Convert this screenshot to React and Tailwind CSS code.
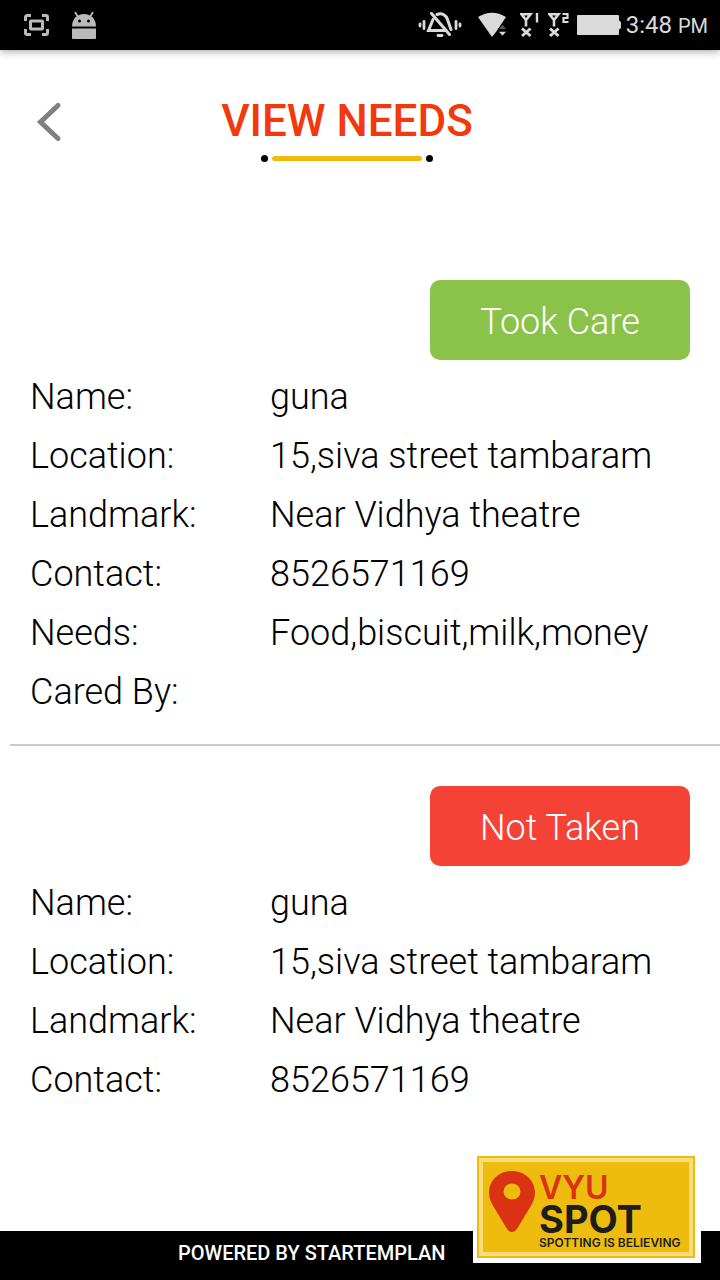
const person = [
  ["Name:", "guna"],
  ["Location:", "15,siva street tambaram"],
  ["Landmark:", "Near Vidhya theatre"],
  ["Contact:", "8526571169"],
];

const needs = [
  {
    id: 1,
    status: "Took Care",
    color: "bg-[#8bc34a]",
    rows: [...person, ["Needs:", "Food,biscuit,milk,money"], ["Cared By:", ""]],
  },
  { id: 2, status: "Not Taken", color: "bg-[#f44336]", rows: person },
];

function ScreenshotIcon() {
  return (
    <svg width="26" height="22" viewBox="0 0 26 22" fill="none" stroke="#bababa" aria-hidden="true">
      <path d="M1.500 7V3a1.500 1.500 0 0 1 1.500-1.500h4M18 1.500h4A1.500 1.500 0 0 1 23.500 3v4M23.500 15v4a1.500 1.500 0 0 1-1.500 1.500h-4M7 20.500H3A1.500 1.500 0 0 1 1.500 19v-4" strokeWidth="3" />
      <rect x="6.500" y="7" width="12" height="8" rx="0.500" strokeWidth="3" />
    </svg>
  );
}

function AndroidIcon() {
  return (
    <svg width="24" height="28" viewBox="0 0 24 28" aria-hidden="true">
      <path d="M3 1l3 5M21 1l-3 5" stroke="#bababa" strokeWidth="1.800" />
      <path d="M0 15.500C0 8 5 3 12 3s12 5 12 12.500z" fill="#bababa" />
      <circle cx="7.500" cy="10" r="1.500" />
      <circle cx="16.500" cy="10" r="1.500" />
      <path d="M0 17.500h24V27a1 1 0 0 1-1 1H1a1 1 0 0 1-1-1z" fill="#bababa" />
    </svg>
  );
}

function SilentIcon() {
  return (
    <svg width="44" height="26" viewBox="0 0 44 26" fill="none" stroke="#dadada" strokeLinecap="round" aria-hidden="true">
      <path d="M2 12v2M6 9.500v7M38 9.500v7M42 12v2" strokeWidth="2.800" />
      <path d="M15 7.500L10.500 18.500H28M19 2.500C24 0.500 28 3 29.500 7.500l3.500 10" strokeWidth="3" />
      <path d="M13.500 1.500L31.500 22.500" strokeWidth="3" />
      <path d="M20 23.500h4" strokeWidth="2.800" />
    </svg>
  );
}

function WifiIcon() {
  return (
    <svg width="30" height="26" viewBox="0 0 30 26" aria-hidden="true">
      <path d="M0 5Q14 -3.500 28 5L23 12.500L19.500 18L14 25z" fill="#dadada" />
      <path d="M20 17.500l4.500-5.500 4.500 5.500z" fill="#555" stroke="#000" />
      <path d="M20.500 19.500h8L24.500 24z" fill="#dadada" stroke="#000" strokeWidth="0.500" />
    </svg>
  );
}

function SimIcon({ digit }) {
  return (
    <svg width="21" height="26" viewBox="0 0 21 26" fill="none" stroke="#dadada" aria-hidden="true">
      <path d="M1.500 2.200h9L6 8zM6 8v6.500" strokeWidth="2.600" />
      <path d="M2 16.500l8.500 7.500M10.500 16.500L2 24" strokeWidth="3" />
      {digit === 1 ? (
        <path d="M17 1v9.500" strokeWidth="2.400" />
      ) : (
        <path d="M14.500 2h5v4h-4v4h5" strokeWidth="2.200" />
      )}
    </svg>
  );
}

function BatteryIcon() {
  return (
    <svg width="45" height="20" viewBox="0 0 45 20" fill="#dadada" aria-hidden="true">
      <rect width="42" height="20" rx="1" />
      <path d="M42 5.500l2 1.500v6l-2 1.500z" />
    </svg>
  );
}

function StatusBar() {
  return (
    <div className="flex h-[50px] items-center bg-black pr-3 pl-6 text-[#dadada] shadow-[0_1px_8px_rgba(0,0,0,0.4)]">
      <div className="flex flex-1 items-center gap-[22px]">
        <ScreenshotIcon />
        <AndroidIcon />
      </div>
      <div className="flex items-center">
        <SilentIcon />
        <span className="ml-4">
          <WifiIcon />
        </span>
        <span className="ml-3 flex gap-[7px]">
          <SimIcon digit={1} />
          <SimIcon digit={2} />
        </span>
        <span className="ml-2">
          <BatteryIcon />
        </span>
        <span className="ml-1 flex items-baseline gap-[6px] text-[24px] leading-none">
          3:48<span className="text-[20px]">PM</span>
        </span>
      </div>
    </div>
  );
}

function Header() {
  return (
    <header className="flex items-start pt-[50px]">
      <button type="button" aria-label="Back" className="w-24 pl-9">
        <svg width="26" height="44" viewBox="0 0 26 44" fill="none" stroke="#808080" strokeWidth="5" aria-hidden="true">
          <path d="M22 5.500L4.500 22l17.500 16.500" strokeLinecap="round" strokeLinejoin="miter" />
        </svg>
      </button>
      <div className="flex flex-1 flex-col items-center">
        <h1 className="text-[44px] leading-[42px] font-medium whitespace-nowrap text-[#f1390d]">VIEW NEEDS</h1>
        <div className="mt-[13px] flex items-center gap-1">
          <span className="size-[7px] rounded-full bg-black" />
          <span className="h-[5px] w-[150px] rounded-full bg-[#edbc0f]" />
          <span className="size-[7px] rounded-full bg-black" />
        </div>
      </div>
      <div className="w-[122px]" />
    </header>
  );
}

function NeedCard({ need }) {
  return (
    <li className="ml-[10px] border-b-2 border-[#cccccc] pt-10 pr-[30px] pb-[22px] pl-5 last:border-b-0">
      <div className="flex justify-end">
        <button type="button" className={`h-20 w-[260px] rounded-[10px] pt-1 text-white ${need.color}`}>
          {need.status}
        </button>
      </div>
      <dl className="mt-2">
        {need.rows.map(([label, value]) => (
          <div key={label} className="flex leading-[59px]">
            <dt className="w-60 shrink-0">{label}</dt>
            <dd>{value}</dd>
          </div>
        ))}
      </dl>
    </li>
  );
}

function Logo() {
  return (
    <div className="absolute right-[19px] bottom-[17px] bg-white pt-px pr-[6px] pb-[5px] pl-1">
      <div className="bg-[#edbc0f] p-[2px]">
        <div className="flex h-[98px] w-[214px] border-4 border-[#f8dc7c] pt-[9px] pl-[6px] font-['Inter',sans-serif] text-[#1d1d1b]">
          <svg width="46" height="61" viewBox="0 0 46 61" className="shrink-0" aria-hidden="true">
            <path
              fill="#db3213"
              fillRule="evenodd"
              d="M23 0C10 0 0 9.500 0 22c0 5 2 9 4.500 13.500L18 58c2.500 4 7.500 4 10 0l13.500-22.500C44 31 46 27 46 22 46 9.500 36 0 23 0zM23 12.500a8.500 8 0 1 1 0 16 8.500 8 0 0 1 0-16z"
            />
          </svg>
          <div className="ml-1 whitespace-nowrap">
            <div className="text-[32px] leading-[33px] font-semibold text-[#db3213]">VYU</div>
            <div className="text-[38px] leading-[30px] font-bold">SPOT</div>
            <div className="text-[12px] leading-[17px] font-semibold">SPOTTING IS BELIEVING</div>
          </div>
        </div>
      </div>
    </div>
  );
}

export default function App() {
  return (
    <div className="flex min-h-screen flex-col bg-white font-['Roboto',sans-serif] text-black">
      <StatusBar />
      <Header />
      <main className="flex-1 pt-[78px]">
        <ul className="text-[36px] font-light">
          {needs.map((need) => (
            <NeedCard key={need.id} need={need} />
          ))}
        </ul>
      </main>
      <footer className="relative flex h-[49px] items-center bg-black pl-[178px] text-white">
        <p className="pb-[6px] text-[20px] leading-none font-medium whitespace-nowrap">POWERED BY STARTEMPLAN</p>
        <Logo />
      </footer>
    </div>
  );
}
